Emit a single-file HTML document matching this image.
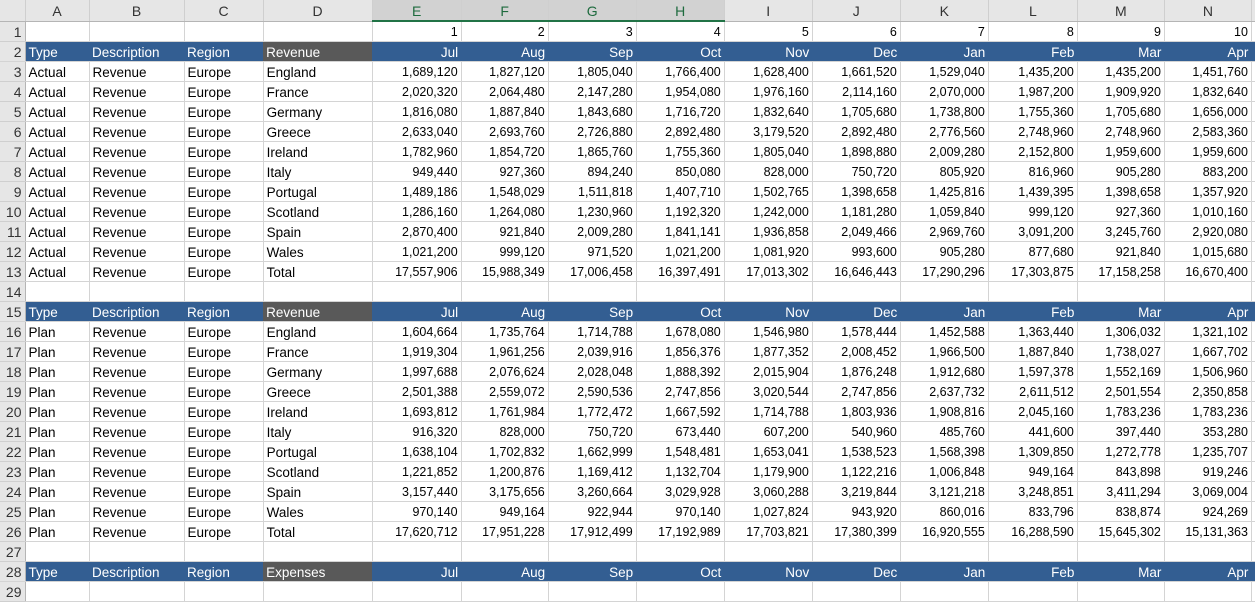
<!DOCTYPE html>
<html><head><meta charset="utf-8"><style>
*{margin:0;padding:0;box-sizing:border-box}
body{width:1255px;height:587px;overflow:hidden;background:#fff;font-family:"Liberation Sans",Arial,sans-serif;font-size:12.5px;color:#000}
table{border-collapse:collapse;table-layout:fixed;width:1256px}
td{height:20px;border-right:1px solid #d4d4d4;border-bottom:1px solid #d4d4d4;padding:2px 3px 0 3px;white-space:nowrap;overflow:hidden;line-height:17px;text-align:right}
td.l{text-align:left;font-size:13.5px}
td.rh{background:#e6e6e6;color:#333;text-align:right;padding:2px 3px 0 0;border-right:1px solid #b5b5b5;border-bottom:1px solid #cfcfcf;font-size:14px}
tr.ch td{height:21px;background:#e6e6e6;color:#333;text-align:center;border-right:1px solid #cfcfcf;border-bottom:1px solid #b5b5b5;font-size:14px}
tr.ch td.s{background:#d2d2d2;color:#1e6b3e;border-bottom:2px solid #217346}
tr.h td{background:#335e92;color:#fff;border-right:none;border-bottom:1px solid #d4d4d4;font-size:13.5px}
tr.h td.rh{background:#e6e6e6;color:#333;border-right:1px solid #b5b5b5;font-size:14px}
tr.h td.g{background:#595959}
</style></head><body>
<table>
<colgroup><col style="width:25px"><col style="width:64px"><col style="width:95px"><col style="width:79px"><col style="width:109px"><col style="width:89px"><col style="width:87px"><col style="width:88px"><col style="width:88px"><col style="width:88px"><col style="width:88px"><col style="width:88px"><col style="width:89px"><col style="width:87px"><col style="width:87px"><col style="width:4px"></colgroup>
<tr class="ch"><td></td><td>A</td><td>B</td><td>C</td><td>D</td><td class="s">E</td><td class="s">F</td><td class="s">G</td><td class="s">H</td><td>I</td><td>J</td><td>K</td><td>L</td><td>M</td><td>N</td><td></td></tr>
<tr><td class="rh">1</td><td></td><td></td><td></td><td></td><td>1</td><td>2</td><td>3</td><td>4</td><td>5</td><td>6</td><td>7</td><td>8</td><td>9</td><td>10</td><td></td></tr>
<tr class="h"><td class="rh">2</td><td class="l">Type</td><td class="l">Description</td><td class="l">Region</td><td class="l g">Revenue</td><td>Jul</td><td>Aug</td><td>Sep</td><td>Oct</td><td>Nov</td><td>Dec</td><td>Jan</td><td>Feb</td><td>Mar</td><td>Apr</td><td></td></tr>
<tr><td class="rh">3</td><td class="l">Actual</td><td class="l">Revenue</td><td class="l">Europe</td><td class="l">England</td><td>1,689,120</td><td>1,827,120</td><td>1,805,040</td><td>1,766,400</td><td>1,628,400</td><td>1,661,520</td><td>1,529,040</td><td>1,435,200</td><td>1,435,200</td><td>1,451,760</td><td></td></tr>
<tr><td class="rh">4</td><td class="l">Actual</td><td class="l">Revenue</td><td class="l">Europe</td><td class="l">France</td><td>2,020,320</td><td>2,064,480</td><td>2,147,280</td><td>1,954,080</td><td>1,976,160</td><td>2,114,160</td><td>2,070,000</td><td>1,987,200</td><td>1,909,920</td><td>1,832,640</td><td></td></tr>
<tr><td class="rh">5</td><td class="l">Actual</td><td class="l">Revenue</td><td class="l">Europe</td><td class="l">Germany</td><td>1,816,080</td><td>1,887,840</td><td>1,843,680</td><td>1,716,720</td><td>1,832,640</td><td>1,705,680</td><td>1,738,800</td><td>1,755,360</td><td>1,705,680</td><td>1,656,000</td><td></td></tr>
<tr><td class="rh">6</td><td class="l">Actual</td><td class="l">Revenue</td><td class="l">Europe</td><td class="l">Greece</td><td>2,633,040</td><td>2,693,760</td><td>2,726,880</td><td>2,892,480</td><td>3,179,520</td><td>2,892,480</td><td>2,776,560</td><td>2,748,960</td><td>2,748,960</td><td>2,583,360</td><td></td></tr>
<tr><td class="rh">7</td><td class="l">Actual</td><td class="l">Revenue</td><td class="l">Europe</td><td class="l">Ireland</td><td>1,782,960</td><td>1,854,720</td><td>1,865,760</td><td>1,755,360</td><td>1,805,040</td><td>1,898,880</td><td>2,009,280</td><td>2,152,800</td><td>1,959,600</td><td>1,959,600</td><td></td></tr>
<tr><td class="rh">8</td><td class="l">Actual</td><td class="l">Revenue</td><td class="l">Europe</td><td class="l">Italy</td><td>949,440</td><td>927,360</td><td>894,240</td><td>850,080</td><td>828,000</td><td>750,720</td><td>805,920</td><td>816,960</td><td>905,280</td><td>883,200</td><td></td></tr>
<tr><td class="rh">9</td><td class="l">Actual</td><td class="l">Revenue</td><td class="l">Europe</td><td class="l">Portugal</td><td>1,489,186</td><td>1,548,029</td><td>1,511,818</td><td>1,407,710</td><td>1,502,765</td><td>1,398,658</td><td>1,425,816</td><td>1,439,395</td><td>1,398,658</td><td>1,357,920</td><td></td></tr>
<tr><td class="rh">10</td><td class="l">Actual</td><td class="l">Revenue</td><td class="l">Europe</td><td class="l">Scotland</td><td>1,286,160</td><td>1,264,080</td><td>1,230,960</td><td>1,192,320</td><td>1,242,000</td><td>1,181,280</td><td>1,059,840</td><td>999,120</td><td>927,360</td><td>1,010,160</td><td></td></tr>
<tr><td class="rh">11</td><td class="l">Actual</td><td class="l">Revenue</td><td class="l">Europe</td><td class="l">Spain</td><td>2,870,400</td><td>921,840</td><td>2,009,280</td><td>1,841,141</td><td>1,936,858</td><td>2,049,466</td><td>2,969,760</td><td>3,091,200</td><td>3,245,760</td><td>2,920,080</td><td></td></tr>
<tr><td class="rh">12</td><td class="l">Actual</td><td class="l">Revenue</td><td class="l">Europe</td><td class="l">Wales</td><td>1,021,200</td><td>999,120</td><td>971,520</td><td>1,021,200</td><td>1,081,920</td><td>993,600</td><td>905,280</td><td>877,680</td><td>921,840</td><td>1,015,680</td><td></td></tr>
<tr><td class="rh">13</td><td class="l">Actual</td><td class="l">Revenue</td><td class="l">Europe</td><td class="l">Total</td><td>17,557,906</td><td>15,988,349</td><td>17,006,458</td><td>16,397,491</td><td>17,013,302</td><td>16,646,443</td><td>17,290,296</td><td>17,303,875</td><td>17,158,258</td><td>16,670,400</td><td></td></tr>
<tr><td class="rh">14</td><td></td><td></td><td></td><td></td><td></td><td></td><td></td><td></td><td></td><td></td><td></td><td></td><td></td><td></td><td></td></tr>
<tr class="h"><td class="rh">15</td><td class="l">Type</td><td class="l">Description</td><td class="l">Region</td><td class="l g">Revenue</td><td>Jul</td><td>Aug</td><td>Sep</td><td>Oct</td><td>Nov</td><td>Dec</td><td>Jan</td><td>Feb</td><td>Mar</td><td>Apr</td><td></td></tr>
<tr><td class="rh">16</td><td class="l">Plan</td><td class="l">Revenue</td><td class="l">Europe</td><td class="l">England</td><td>1,604,664</td><td>1,735,764</td><td>1,714,788</td><td>1,678,080</td><td>1,546,980</td><td>1,578,444</td><td>1,452,588</td><td>1,363,440</td><td>1,306,032</td><td>1,321,102</td><td></td></tr>
<tr><td class="rh">17</td><td class="l">Plan</td><td class="l">Revenue</td><td class="l">Europe</td><td class="l">France</td><td>1,919,304</td><td>1,961,256</td><td>2,039,916</td><td>1,856,376</td><td>1,877,352</td><td>2,008,452</td><td>1,966,500</td><td>1,887,840</td><td>1,738,027</td><td>1,667,702</td><td></td></tr>
<tr><td class="rh">18</td><td class="l">Plan</td><td class="l">Revenue</td><td class="l">Europe</td><td class="l">Germany</td><td>1,997,688</td><td>2,076,624</td><td>2,028,048</td><td>1,888,392</td><td>2,015,904</td><td>1,876,248</td><td>1,912,680</td><td>1,597,378</td><td>1,552,169</td><td>1,506,960</td><td></td></tr>
<tr><td class="rh">19</td><td class="l">Plan</td><td class="l">Revenue</td><td class="l">Europe</td><td class="l">Greece</td><td>2,501,388</td><td>2,559,072</td><td>2,590,536</td><td>2,747,856</td><td>3,020,544</td><td>2,747,856</td><td>2,637,732</td><td>2,611,512</td><td>2,501,554</td><td>2,350,858</td><td></td></tr>
<tr><td class="rh">20</td><td class="l">Plan</td><td class="l">Revenue</td><td class="l">Europe</td><td class="l">Ireland</td><td>1,693,812</td><td>1,761,984</td><td>1,772,472</td><td>1,667,592</td><td>1,714,788</td><td>1,803,936</td><td>1,908,816</td><td>2,045,160</td><td>1,783,236</td><td>1,783,236</td><td></td></tr>
<tr><td class="rh">21</td><td class="l">Plan</td><td class="l">Revenue</td><td class="l">Europe</td><td class="l">Italy</td><td>916,320</td><td>828,000</td><td>750,720</td><td>673,440</td><td>607,200</td><td>540,960</td><td>485,760</td><td>441,600</td><td>397,440</td><td>353,280</td><td></td></tr>
<tr><td class="rh">22</td><td class="l">Plan</td><td class="l">Revenue</td><td class="l">Europe</td><td class="l">Portugal</td><td>1,638,104</td><td>1,702,832</td><td>1,662,999</td><td>1,548,481</td><td>1,653,041</td><td>1,538,523</td><td>1,568,398</td><td>1,309,850</td><td>1,272,778</td><td>1,235,707</td><td></td></tr>
<tr><td class="rh">23</td><td class="l">Plan</td><td class="l">Revenue</td><td class="l">Europe</td><td class="l">Scotland</td><td>1,221,852</td><td>1,200,876</td><td>1,169,412</td><td>1,132,704</td><td>1,179,900</td><td>1,122,216</td><td>1,006,848</td><td>949,164</td><td>843,898</td><td>919,246</td><td></td></tr>
<tr><td class="rh">24</td><td class="l">Plan</td><td class="l">Revenue</td><td class="l">Europe</td><td class="l">Spain</td><td>3,157,440</td><td>3,175,656</td><td>3,260,664</td><td>3,029,928</td><td>3,060,288</td><td>3,219,844</td><td>3,121,218</td><td>3,248,851</td><td>3,411,294</td><td>3,069,004</td><td></td></tr>
<tr><td class="rh">25</td><td class="l">Plan</td><td class="l">Revenue</td><td class="l">Europe</td><td class="l">Wales</td><td>970,140</td><td>949,164</td><td>922,944</td><td>970,140</td><td>1,027,824</td><td>943,920</td><td>860,016</td><td>833,796</td><td>838,874</td><td>924,269</td><td></td></tr>
<tr><td class="rh">26</td><td class="l">Plan</td><td class="l">Revenue</td><td class="l">Europe</td><td class="l">Total</td><td>17,620,712</td><td>17,951,228</td><td>17,912,499</td><td>17,192,989</td><td>17,703,821</td><td>17,380,399</td><td>16,920,555</td><td>16,288,590</td><td>15,645,302</td><td>15,131,363</td><td></td></tr>
<tr><td class="rh">27</td><td></td><td></td><td></td><td></td><td></td><td></td><td></td><td></td><td></td><td></td><td></td><td></td><td></td><td></td><td></td></tr>
<tr class="h"><td class="rh">28</td><td class="l">Type</td><td class="l">Description</td><td class="l">Region</td><td class="l g">Expenses</td><td>Jul</td><td>Aug</td><td>Sep</td><td>Oct</td><td>Nov</td><td>Dec</td><td>Jan</td><td>Feb</td><td>Mar</td><td>Apr</td><td></td></tr>
<tr><td class="rh">29</td><td></td><td></td><td></td><td></td><td></td><td></td><td></td><td></td><td></td><td></td><td></td><td></td><td></td><td></td><td></td></tr>
</table>
</body></html>
